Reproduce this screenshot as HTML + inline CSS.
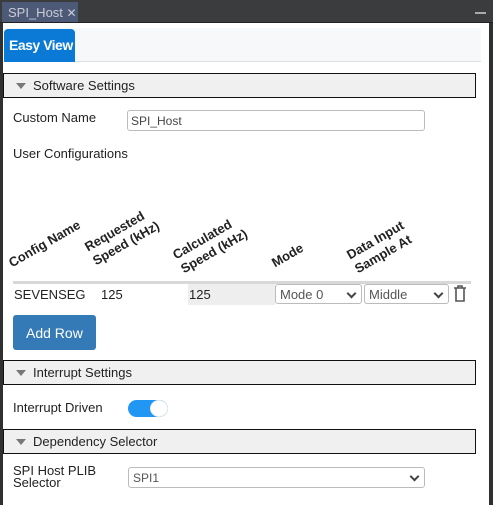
<!DOCTYPE html>
<html><head><style>
*{box-sizing:border-box;margin:0;padding:0}
body{width:493px;height:505px;background:#2f3032;font-family:"Liberation Sans","DejaVu Sans",sans-serif;position:relative;overflow:hidden;font-size:13px;color:#222}
.a{position:absolute}
.top{left:0;top:0;width:493px;height:23px;background:#3b3c3e;border-bottom:1px solid #222}
.tab{left:2px;top:2px;width:76px;height:20px;background:#4c5a78;color:#c9ccd4;font-size:13px;padding:3px 0 0 6px;white-space:nowrap}
.main{left:3px;top:23px;width:486px;height:482px;background:#fff}
.strip{left:4px;top:28px;width:477px;height:34px;background:#f7f8f9;border-bottom:1px solid #dde0e4}
.ev{left:4px;top:29px;width:71px;height:33px;background:#0a7ad6;border-radius:4px 4px 0 0;color:#fff;font-weight:bold;font-size:14px;padding:8px 0 0 5px;white-space:nowrap;letter-spacing:-0.5px}
.sec{left:3px;width:473px;height:25px;background:#f0f0f0;border:1px solid #111;padding:4px 0 0 29px;font-size:13px}
.sec:before{content:"";position:absolute;left:12px;top:9px;border-left:5px solid transparent;border-right:5px solid transparent;border-top:6px solid #777}
.inp{border:1px solid #bbb;border-radius:3px;background:#fff;font-size:12px;padding:3px 0 0 3px;color:#444}
.hd{font-weight:bold;font-size:13px;transform:rotate(-30deg);transform-origin:left bottom;line-height:16px;white-space:nowrap}
.sel{border:1px solid #bbb;border-radius:3px;background:#fff;font-size:13px;color:#555;padding:2px 0 0 4px}
.chev{position:absolute;right:6px;top:5px;width:7px;height:7px;border-right:2px solid #444;border-bottom:2px solid #444;transform:rotate(45deg)}
</style></head><body>
<div class="a top"></div>
<div class="a tab">SPI_Host <span style="font-size:12px">✕</span></div>
<div class="a" style="left:475px;top:12px;width:11px;height:2px;background:#aaa"></div>
<div class="a main"></div>
<div class="a strip"></div>
<div class="a ev">Easy View</div>

<div class="a sec" style="top:73px">Software Settings</div>
<div class="a" style="left:13px;top:110px">Custom Name</div>
<div class="a inp" style="left:127px;top:110px;width:298px;height:21px">SPI_Host</div>
<div class="a" style="left:13px;top:146px">User Configurations</div>

<div class="a hd" style="left:14px;top:255px">Config Name</div>
<div class="a hd" style="left:98px;top:237px">Requested<br>Speed (kHz)</div>
<div class="a hd" style="left:186px;top:245px">Calculated<br>Speed (kHz)</div>
<div class="a hd" style="left:277px;top:255px">Mode</div>
<div class="a hd" style="left:360px;top:245px">Data Input<br>Sample At</div>
<div class="a" style="left:13px;top:281px;width:458px;height:3px;background:#d8d8d8"></div>
<div class="a" style="left:188px;top:284px;width:87px;height:21px;background:#eee"></div>
<div class="a" style="left:14px;top:287px">SEVENSEG</div>
<div class="a" style="left:101px;top:287px">125</div>
<div class="a" style="left:189px;top:287px">125</div>
<div class="a sel" style="left:275px;top:284px;width:87px;height:20px">Mode 0<span class="chev"></span></div>
<div class="a sel" style="left:364px;top:284px;width:85px;height:20px">Middle<span class="chev"></span></div>
<svg class="a" style="left:453px;top:285px" width="14" height="17" viewBox="0 0 14 17"><path d="M1 3h12M5 3V1h4v2M3 3v13h8V3" fill="none" stroke="#555" stroke-width="1.6"/></svg>
<div class="a" style="left:13px;top:315px;width:83px;height:35px;background:#337ab7;border-radius:3px;color:#fff;font-size:14px;padding:10px 0 0 13px">Add Row</div>

<div class="a sec" style="top:360px">Interrupt Settings</div>
<div class="a" style="left:13px;top:400px">Interrupt Driven</div>
<div class="a" style="left:128px;top:400px;width:40px;height:17px;background:#2196f3;border-radius:9px"></div>
<div class="a" style="left:150px;top:400px;width:18px;height:17px;background:#fff;border-radius:50%;border:1px solid #eee"></div>

<div class="a sec" style="top:429px">Dependency Selector</div>
<div class="a" style="left:13px;top:465px;line-height:12px">SPI Host PLIB<br>Selector</div>
<div class="a sel" style="left:128px;top:467px;width:297px;height:21px;font-size:12px;padding-top:3px">SPI1<span class="chev"></span></div>
</body></html>
